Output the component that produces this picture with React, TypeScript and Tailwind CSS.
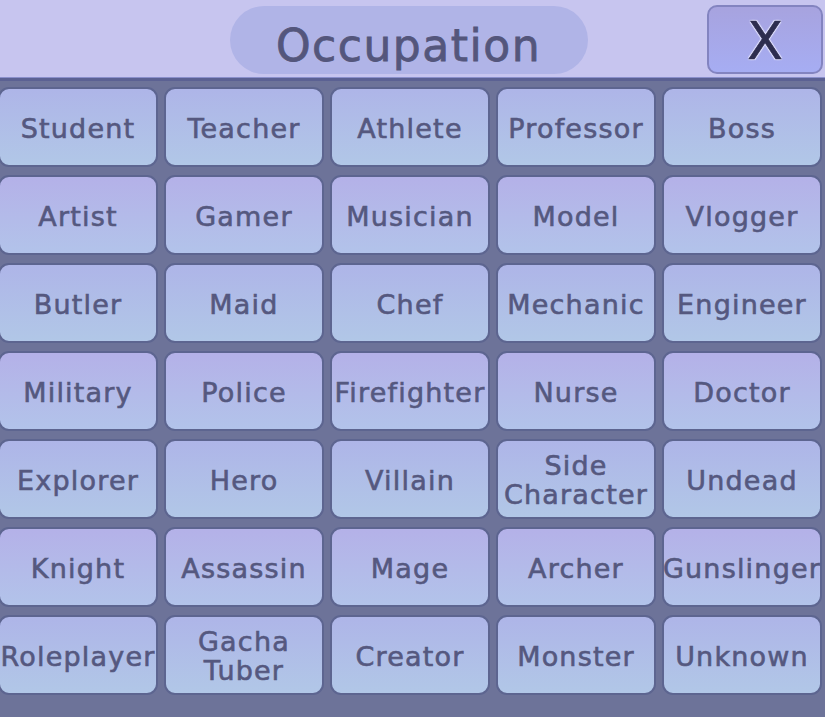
import React from "react";

const rows: string[][] = [
  ["Student", "Teacher", "Athlete", "Professor", "Boss"],
  ["Artist", "Gamer", "Musician", "Model", "Vlogger"],
  ["Butler", "Maid", "Chef", "Mechanic", "Engineer"],
  ["Military", "Police", "Firefighter", "Nurse", "Doctor"],
  ["Explorer", "Hero", "Villain", "Side\nCharacter", "Undead"],
  ["Knight", "Assassin", "Mage", "Archer", "Gunslinger"],
  ["Roleplayer", "Gacha\nTuber", "Creator", "Monster", "Unknown"],
];

export default function App() {
  return (
    <div
      className="w-[825px] h-[717px] overflow-hidden bg-[#6d7399] flex flex-col"
      style={{ fontFamily: '"DejaVu Sans", sans-serif' }}
    >
      <div className="h-[77px] bg-[#c7c5ef] relative flex items-start justify-center shrink-0">
        <div className="mt-[6px] ml-[-8px] w-[358px] h-[68px] rounded-full bg-[#b0b4e7] flex items-center justify-center">
          <span className="text-[44px] leading-none text-[#54567c] tracking-[1.5px] mt-[11px] [-webkit-text-stroke:0.8px_#54567c]">Occupation</span>
        </div>
        <div className="absolute left-[707px] top-[5px] w-[116px] h-[69px] rounded-[10px] border-2 border-[#8384c0] bg-gradient-to-b from-[#a7a3df] to-[#a6adf3] flex items-center justify-center">
          <span className="text-[52px] leading-none text-[#2d2d4f] mt-[2px] [-webkit-text-stroke:0.6px_#2d2d4f] [text-shadow:0_0_1px_#e4e4ff,1px_1px_1px_#e4e4ff,-1px_-1px_1px_#e4e4ff,1px_-1px_1px_#e4e4ff,-1px_1px_1px_#e4e4ff]">X</span>
        </div>
      </div>
      <div className="h-[1px] bg-[#8a8fcb] shrink-0" />
      <div className="h-[3px] bg-[#5b6193] shrink-0" />
      <div className="-ml-[2px] mt-[6px] grid grid-cols-[repeat(5,160px)] gap-x-[6px] gap-y-[8px]">
        {rows.map((row, ri) =>
          row.map((label) => (
            <div
              key={label}
              className={
                "h-[80px] pt-[2px] rounded-[11px] border-2 border-[#5d6590] flex items-center justify-center text-center whitespace-pre-line text-[27px] leading-[29px] tracking-[1.2px] text-[#55587f] [-webkit-text-stroke:0.6px_#55587f] bg-gradient-to-b " +
                (ri % 2 === 0
                  ? "from-[#aeb5e8] to-[#b1c7e7]"
                  : "from-[#b4b1e8] to-[#b2c3ea]")
              }
            >
              {label}
            </div>
          ))
        )}
      </div>
    </div>
  );
}
